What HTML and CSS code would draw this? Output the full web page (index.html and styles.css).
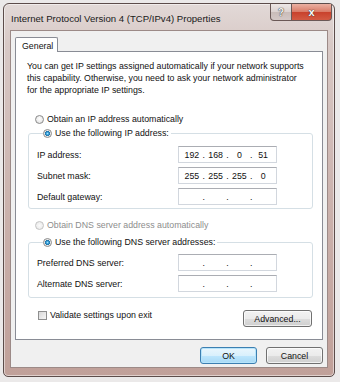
FILE: index.html
```html
<!DOCTYPE html>
<html>
<head>
<meta charset="utf-8">
<link rel="stylesheet" href="styles.css">
</head>
<body>
<div class="window">
  <div class="titlebar">
    <span class="title">Internet Protocol Version 4 (TCP/IPv4) Properties</span>
    <div class="caption">
      <span class="cbtn help">?</span>
      <span class="cbtn close">x</span>
    </div>
  </div>
  <div class="client">
    <div class="tabs"><span class="tab">General</span></div>
    <div class="panel">
      <p class="intro">You can get IP settings assigned automatically if your network supports<br>this capability. Otherwise, you need to ask your network administrator<br>for the appropriate IP settings.</p>
      <div class="opt first"><span class="radio"></span><span>Obtain an IP address automatically</span></div>
      <fieldset class="group g1">
        <legend><span class="radio on"></span><span>Use the following IP address:</span></legend>
        <div class="row"><span class="lbl">IP address:</span><span class="ip"><span>192</span><i>.</i><span>168</span><i>.</i><span>0</span><i>.</i><span>51</span></span></div>
        <div class="row"><span class="lbl">Subnet mask:</span><span class="ip"><span>255</span><i>.</i><span>255</span><i>.</i><span>255</span><i>.</i><span>0</span></span></div>
        <div class="row"><span class="lbl">Default gateway:</span><span class="ip"><span></span><i>.</i><span></span><i>.</i><span></span><i>.</i><span></span></span></div>
      </fieldset>
      <div class="opt dis"><span class="radio off"></span><span>Obtain DNS server address automatically</span></div>
      <fieldset class="group g2">
        <legend><span class="radio on"></span><span>Use the following DNS server addresses:</span></legend>
        <div class="row"><span class="lbl">Preferred DNS server:</span><span class="ip"><span></span><i>.</i><span></span><i>.</i><span></span><i>.</i><span></span></span></div>
        <div class="row"><span class="lbl">Alternate DNS server:</span><span class="ip"><span></span><i>.</i><span></span><i>.</i><span></span><i>.</i><span></span></span></div>
      </fieldset>
      <div class="bottomrow">
        <div class="check"><span class="box"></span><span>Validate settings upon exit</span></div>
        <span class="btn adv">Advanced...</span>
      </div>
    </div>
    <div class="actions">
      <span class="btn ok">OK</span>
      <span class="btn">Cancel</span>
    </div>
  </div>
</div>
</body>
</html>
```
FILE: styles.css
```css
html, body { margin: 0; padding: 0; }
body {
  width: 340px; height: 382px;
  background: #ebe9e9;
  font-family: "Liberation Sans", Arial, sans-serif;
  font-size: 8.8px;
  color: #111;
  overflow: hidden;
}
.window {
  margin: 3px 0 0 3px;
  width: 332px; height: 374px;
  box-sizing: border-box;
  border: 1px solid #5c4c4a;
  border-radius: 6px 6px 5px 5px;
  background: linear-gradient(#e2d9d7, #d8c9c6 40px, #cbb2ad 200px, #c0a099);
  box-shadow: inset 0 0 0 1px rgba(255,255,255,0.5);
  display: flex; flex-direction: column;
}
.titlebar {
  height: 26px;
  display: flex;
  justify-content: space-between;
  padding: 0 2px 0 7px;
}
.title { font-size: 9.6px; padding-top: 9px; color: #1a1a1a; }
.caption { display: flex; height: 17px; }
.cbtn {
  height: 17px; box-sizing: border-box;
  border: 1px solid #6a5856; border-top: 0;
  display: flex; align-items: center; justify-content: center;
  color: #fff; font-weight: bold;
  text-shadow: 0 0 1px #333, 0 0 1px #333;
}
.help {
  width: 22px; border-radius: 0 0 0 4px;
  background: linear-gradient(#ede7e6, #dcd2d0 50%, #c9bcb9 51%, #d4c8c6);
  font-size: 10px; color: #f4f4f4;
}
.close {
  width: 40px; border-left: 0; border-radius: 0 0 4px 0;
  background: linear-gradient(#eab0a2, #d97a66 50%, #c8412c 51%, #d35a43);
  font-size: 11px;
}
.client {
  flex: 1;
  margin: 0 6px 8px 6px;
  border: 1px solid #9c8a87;
  background: #f0f0f0;
  padding: 6px 4px 0 4px;
}
.tabs { display: flex; }
.tab {
  position: relative; z-index: 1;
  width: 43px; height: 15px; box-sizing: border-box;
  border: 1px solid #898c95; border-bottom: 0;
  border-radius: 2px 2px 0 0;
  background: #fff;
  padding: 3px 0 0 6px;
  margin-bottom: -1px;
}
.panel {
  height: 289px; box-sizing: border-box;
  border: 1px solid #898c95;
  background: #fff;
  padding: 8px 10px 0 11px;
}
.intro { margin: 0; line-height: 12px; white-space: nowrap; }
.opt, legend, .check {
  display: flex; align-items: center; line-height: 12px; height: 12px;
}
.opt { margin-left: 8px; }
.opt.first { margin-top: 17px; }
.opt.dis { margin-top: 10px; color: #8d8d8d; }
.radio {
  width: 9px; height: 9px; box-sizing: border-box;
  border-radius: 50%;
  border: 1px solid #8a8a8a;
  background: radial-gradient(circle at 50% 40%, #ffffff, #dcdcdc);
  margin-right: 3px;
}
.radio.on {
  background: radial-gradient(circle at 50% 50%, #9fe0ff 0, #3da2d8 1.2px, #1b6fa6 2.4px, #e8e8e8 2.8px, #f4f4f4 4px);
}
.radio.off { border-color: #c3c3c3; background: radial-gradient(#fafafa, #e6e6e6); }
.group {
  margin: 2px 0 0 1px; padding: 0 0 3px 8px;
  width: 285px; box-sizing: border-box;
  border: 1px solid #d5dfe5; border-radius: 3px;
  min-width: 0;
}
.group legend { padding: 0 2px 0 0; margin-left: 6px; }
.g2 { margin-top: 5px; padding-bottom: 5px; }
.g1 .row:first-of-type { margin-top: 7px; }
.g2 .row:first-of-type { margin-top: 6px; }
.row { display: flex; align-items: center; height: 17px; margin-top: 4px; }
.lbl { width: 141px; }
.ip {
  width: 99px; height: 17px; box-sizing: border-box;
  border: 1px solid #d2d7de; border-top-color: #abadb3;
  display: grid;
  grid-template-columns: 1fr 4px 1fr 4px 1fr 4px 1fr;
  align-items: center; text-align: center;
  padding: 0 3px;
  color: #111;
}
.ip i { font-style: normal; }
.bottomrow {
  display: flex; justify-content: space-between; align-items: flex-start;
  margin-top: 12px; padding-right: 0;
}
.check { margin-left: 11px; margin-top: 0; height: 10px; }
.box {
  width: 9px; height: 9px; box-sizing: border-box;
  border: 1px solid #8e8f8f;
  background: linear-gradient(135deg, #d8d8d8, #f6f6f6);
  margin-right: 3px;
}
.btn {
  height: 17px; box-sizing: border-box;
  border: 1px solid #707070; border-radius: 3px;
  background: linear-gradient(#f2f2f2, #ebebeb 50%, #dddddd 51%, #cfcfcf);
  box-shadow: inset 0 0 0 1px rgba(255,255,255,0.7);
  display: flex; align-items: center; justify-content: center;
}
.adv { width: 69px; margin-right: 0; }
.actions {
  display: flex; justify-content: flex-end; gap: 9px;
  margin-top: 7px;
}
.actions .btn { width: 57px; }
.btn.ok {
  border-color: #3c7fb1;
  box-shadow: inset 0 0 0 1px #b6e4fb;
  background: linear-gradient(#eaf6fd, #d9f0fc 50%, #bee6fd 51%, #a7d9f5);
}
```
